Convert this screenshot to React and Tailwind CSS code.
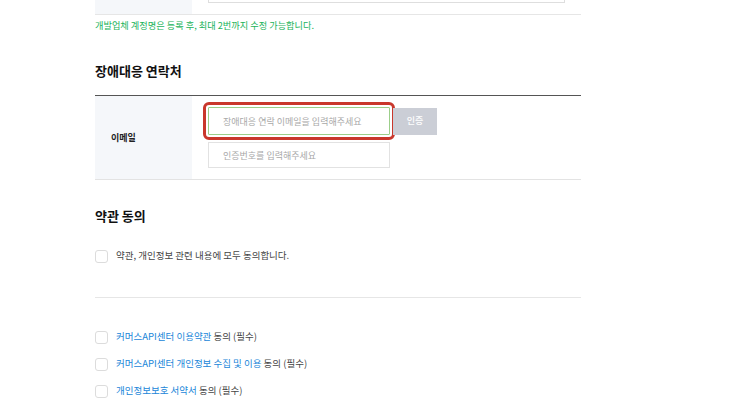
import React from 'react';

const terms = [
  { link: '커머스API센터 이용약관', rest: ' 동의 (필수)' },
  { link: '커머스API센터 개인정보 수집 및 이용', rest: ' 동의 (필수)' },
  { link: '개인정보보호 서약서', rest: ' 동의 (필수)' },
];

function Check({ children }) {
  return (
    <label className="flex items-center h-[14px]">
      <span className="w-[13px] h-[13px] border border-[#dcdcdc] rounded-[3px] bg-white shrink-0" />
      <span className="ml-[8px] text-[9.5px] text-[#444] leading-none">{children}</span>
    </label>
  );
}

export default function App() {
  return (
    <div
      className="w-[742px] h-[398px] overflow-hidden bg-white"
      style={{ fontFamily: '"Noto Sans CJK KR", "Noto Sans", sans-serif' }}
    >
      <div className="ml-[95px] w-[486px]">
        {/* previous row, cut at the top */}
        <div className="flex h-[15px] border-b border-[#e6e6e6]">
          <div className="w-[97px] bg-[#f5f7fa]" />
          <div className="flex-1 h-[14px] overflow-hidden flex flex-col justify-end pl-[16px] pr-[16px] pb-[11px]">
            <div className="h-[30px] shrink-0 border border-[#dedede] bg-white" />
          </div>
        </div>
        <p className="mt-[3px] text-[9.2px] leading-[14px] text-[#19b35a]">
          개발업체 계정명은 등록 후, 최대 2번까지 수정 가능합니다.
        </p>

        <h2 className="mt-[29px] text-[13px] leading-[20px] font-bold text-[#111]">장애대응 연락처</h2>

        <div className="mt-[14px] border-t border-[#555] border-b border-b-[#e3e3e3] flex h-[85px]">
          <div className="w-[97px] bg-[#f5f7fa] flex items-center pl-[16px] text-[9px] font-bold text-[#222]">
            이메일
          </div>
          <div className="flex-1 pl-[16px] pt-[11px] flex flex-col gap-[7px]">
            <div className="flex items-center">
              <input
                readOnly
                placeholder="장애대응 연락 이메일을 입력해주세요"
                className="w-[182px] h-[28px] border border-[#9ccf8a] px-[14px] text-[9px] text-[#333] placeholder:text-[#a8a8a8] outline-[3px] outline-solid outline-[#c9372c] outline-offset-[2px] rounded-[1px]"
              />
              <button className="ml-[3px] w-[44px] h-[27px] bg-[#cbced6] text-white text-[9px] font-medium">인증</button>
            </div>
            <input
              readOnly
              placeholder="인증번호를 입력해주세요"
              className="w-[182px] h-[26px] border border-[#e2e2e2] px-[14px] text-[9px] placeholder:text-[#a8a8a8] outline-none"
            />
          </div>
        </div>

        <h2 className="mt-[26px] text-[13px] leading-[20px] font-bold text-[#111]">약관 동의</h2>

        <div className="mt-[23px]">
          <Check>약관, 개인정보 관련 내용에 모두 동의합니다.</Check>
        </div>

        <div className="mt-[34px] border-t border-[#e6e6e6]" />

        <div className="mt-[32px] flex flex-col gap-[13px]">
          {terms.map((t) => (
            <Check key={t.link}>
              <span className="text-[#2186d9]">{t.link}</span>
              {t.rest}
            </Check>
          ))}
        </div>
      </div>
    </div>
  );
}
